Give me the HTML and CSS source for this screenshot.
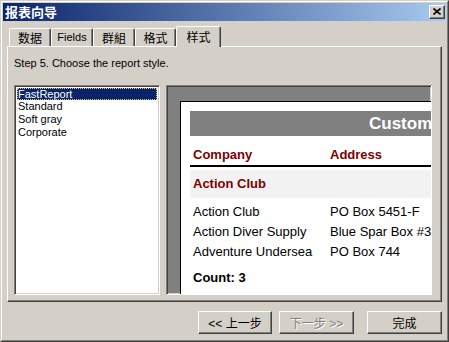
FILE: index.html
```html
<!DOCTYPE html>
<html lang="zh">
<head>
  <meta charset="UTF-8">
  <title>报表向导</title>
  <link rel="stylesheet" href="styles.css">
</head>
<body>

  <div class="window">
    <div class="window-inner">

      <!-- Title bar -->
      <div class="titlebar">
        <span class="title">报表向导</span>
        <span class="close-btn">
          <svg width="8" height="7" viewBox="0 0 8 7"><path d="M0.5 0.5 L7.5 6.5 M7.5 0.5 L0.5 6.5" stroke="#000" stroke-width="1.6" fill="none"/></svg>
        </span>
      </div>

      <!-- Tabs -->
      <div class="tabs">
        <div class="tab cjk w42">数据</div>
        <div class="tab w42">Fields</div>
        <div class="tab cjk w42">群組</div>
        <div class="tab cjk w41">格式</div>
        <div class="tab cjk active">样式</div>
      </div>

      <div class="panel">
        <div class="step">Step 5. Choose the report style.</div>
        <div class="content">
          <div class="listbox">
            <div class="item selected">FastReport</div>
            <div class="item">Standard</div>
            <div class="item">Soft gray</div>
            <div class="item">Corporate</div>
          </div>

          <div class="preview">
            <div class="page">
              <div class="report-title">Customers</div>
              <div class="report-head">
                <span class="col1">Company</span>
                <span>Address</span>
              </div>
              <div class="group-band">Action Club</div>
              <div class="row"><span class="col1">Action Club</span><span>PO Box 5451-F</span></div>
              <div class="row"><span class="col1">Action Diver Supply</span><span>Blue Spar Box #3</span></div>
              <div class="row"><span class="col1">Adventure Undersea</span><span>PO Box 744</span></div>
              <div class="count">Count: 3</div>
            </div>
          </div>
        </div>
      </div>

      <!-- Buttons -->
      <div class="buttons">
        <button class="btn">&lt;&lt; 上一步</button>
        <button class="btn disabled">下一步 &gt;&gt;</button>
        <button class="btn finish">完成</button>
      </div>

    </div>
  </div>

</body>
</html>
```

FILE: styles.css
```css
body {
  margin: 0;
  background-color: #d4d0c8;
  font-family: "Liberation Sans", Arial, sans-serif;
  font-size: 11px;
  color: #000;
  overflow: hidden;
}

.window {
  width: 449px;
  height: 342px;
  box-sizing: border-box;
  border: 1px solid;
  border-color: #d4d0c8 #404040 #404040 #d4d0c8;
}

.window-inner {
  height: 100%;
  box-sizing: border-box;
  border: 1px solid;
  border-color: #fff #808080 #808080 #fff;
  padding: 1px;
}

.titlebar {
  height: 18px;
  display: flex;
  align-items: center;
  justify-content: space-between;
  padding: 0 1px 0 2px;
  background: linear-gradient(to right, #0a246a, #a6caf0);
}

.title {
  color: #fff;
  font-family: "Noto Sans CJK SC", sans-serif;
  font-weight: bold;
  font-size: 13px;
  line-height: 18px;
}

.close-btn {
  width: 16px;
  height: 14px;
  box-sizing: border-box;
  display: flex;
  align-items: center;
  justify-content: center;
  background-color: #d4d0c8;
  border: 1px solid;
  border-color: #fff #404040 #404040 #fff;
  box-shadow: inset -1px -1px #808080;
  padding-bottom: 1px;
}

/* Tabs */
.tabs {
  display: flex;
  align-items: flex-end;
  height: 21px;
  margin: 5px 0 0 6px;
  position: relative;
  z-index: 2;
}

.tab {
  height: 18px;
  box-sizing: border-box;
  text-align: center;
  line-height: 17px;
  border: 1px solid;
  border-bottom: none;
  border-color: #fff #404040 #fff #fff;
  box-shadow: inset -1px 0 #808080;
  border-radius: 2px 2px 0 0;
  background-color: #d4d0c8;
  margin-bottom: 1px;
}

.cjk {
  font-family: "Noto Sans CJK SC", sans-serif;
  font-size: 12px;
}

.w42 { width: 42px; }
.w41 { width: 41px; }

.tab.active {
  width: 45px;
  height: 21px;
  line-height: 19px;
  margin-bottom: 0;
}

.panel {
  height: 256px;
  box-sizing: border-box;
  margin: -1px 4px 0 4px;
  border: 1px solid;
  border-color: #fff #404040 #404040 #fff;
  box-shadow: inset -1px -1px #808080;
  padding: 10px 0 0 6px;
}

.step {
  line-height: 13px;
}

.content {
  display: flex;
  gap: 6px;
  margin-top: 15px;
}

.listbox {
  width: 146px;
  height: 210px;
  box-sizing: border-box;
  background-color: #fff;
  border: 1px solid;
  border-color: #808080 #fff #fff #808080;
  box-shadow: inset 1px 1px #404040, inset -1px -1px #d4d0c8;
  padding: 2px 2px;
}

.item {
  line-height: 13px;
  padding-left: 1px;
}

.item.selected {
  background-color: #0a246a;
  color: #fff;
  outline: 1px dotted #d8c870;
  outline-offset: -1px;
  line-height: 12px;
}

.preview {
  width: 266px;
  height: 210px;
  box-sizing: border-box;
  background-color: #808080;
  border: 1px solid;
  border-color: #808080 #fff #fff #808080;
  box-shadow: inset 1px 1px #404040, inset -1px -1px #d4d0c8;
  overflow: hidden;
  padding: 15px 0 0 13px;
}

.page {
  width: 420px;
  height: 240px;
  background-color: #fff;
  border-left: 1px solid #000;
  border-top: 1px solid #000;
  padding: 9px 0 0 9px;
  font-size: 13px;
}

.report-title {
  height: 25px;
  line-height: 25px;
  background-color: #808080;
  color: #fff;
  font-weight: bold;
  font-size: 17px;
  padding-left: 179px;
}

.report-head {
  display: flex;
  align-items: flex-end;
  height: 31px;
  box-sizing: border-box;
  padding-bottom: 3px;
  border-bottom: 2px solid #000;
  color: #800000;
  font-weight: bold;
}

.col1 {
  width: 137px;
  padding-left: 3px;
}

.group-band {
  margin-top: 3px;
  height: 28px;
  line-height: 28px;
  background-color: #f2f2f2;
  color: #800000;
  font-weight: bold;
  padding-left: 3px;
}

.row {
  display: flex;
  height: 20px;
  line-height: 20px;
}

.group-band + .row {
  margin-top: 4px;
}

.count {
  margin-top: 6px;
  line-height: 20px;
  font-weight: bold;
  padding-left: 3px;
}

/* Buttons */
.buttons {
  display: flex;
  justify-content: flex-end;
  margin: 9px 4px 0 0;
}

.btn {
  width: 74px;
  height: 23px;
  box-sizing: border-box;
  background-color: #d4d0c8;
  border: 1px solid;
  border-color: #fff #404040 #404040 #fff;
  box-shadow: inset -1px -1px #808080;
  font-family: "Liberation Sans", "Noto Sans CJK SC", sans-serif;
  font-size: 12px;
  padding: 0;
  margin-left: 7px;
}

.btn.disabled {
  width: 75px;
  color: #808080;
  text-shadow: 1px 1px #fff;
}

.btn.finish {
  width: 75px;
  margin-left: 13px;
}
```
